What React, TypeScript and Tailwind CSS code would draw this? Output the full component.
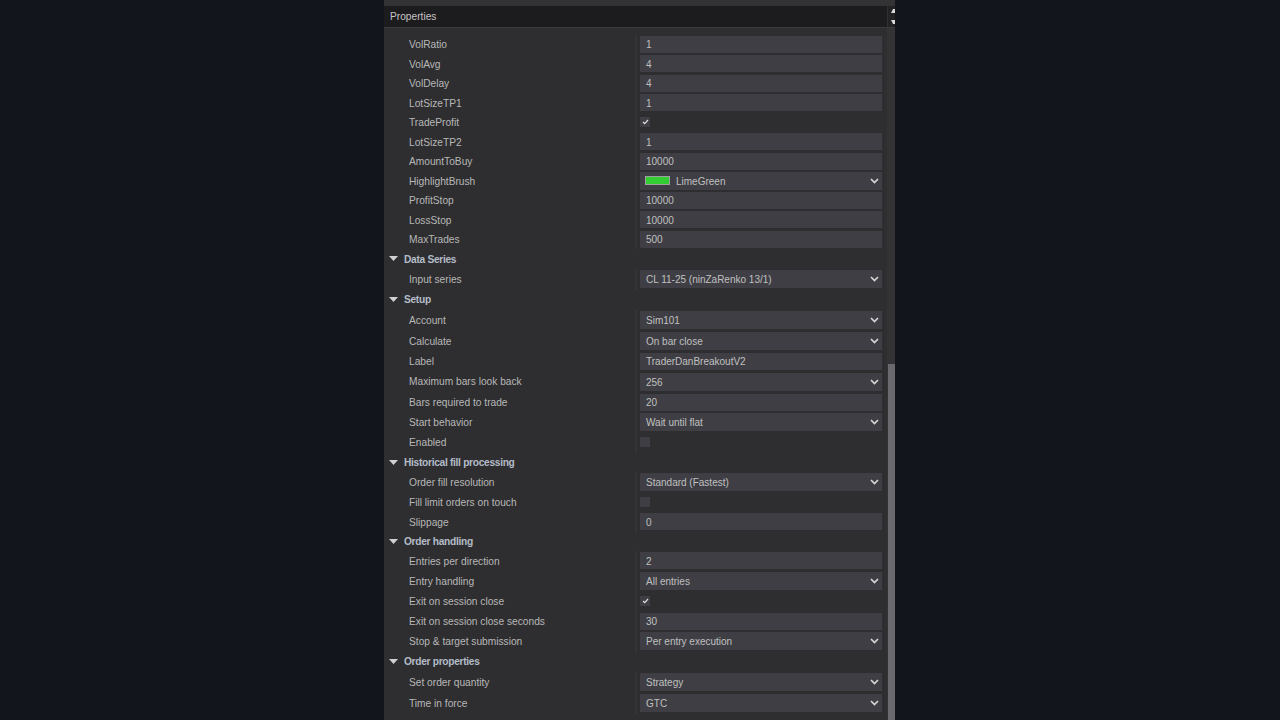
type Kind = "text" | "combo" | "check" | "cat" | "brush";
type Row = { k: Kind; l: string; v?: string; on?: boolean; h: number };

const rows: Row[] = [
  { k: "text", l: "VolRatio", v: "1", h: 19.5 },
  { k: "text", l: "VolAvg", v: "4", h: 19.5 },
  { k: "text", l: "VolDelay", v: "4", h: 19.5 },
  { k: "text", l: "LotSizeTP1", v: "1", h: 19.5 },
  { k: "check", l: "TradeProfit", on: true, h: 19.5 },
  { k: "text", l: "LotSizeTP2", v: "1", h: 19.5 },
  { k: "text", l: "AmountToBuy", v: "10000", h: 19.5 },
  { k: "brush", l: "HighlightBrush", v: "LimeGreen", h: 19.5 },
  { k: "text", l: "ProfitStop", v: "10000", h: 19.5 },
  { k: "text", l: "LossStop", v: "10000", h: 19.5 },
  { k: "text", l: "MaxTrades", v: "500", h: 19.5 },
  { k: "cat", l: "Data Series", h: 19.5 },
  { k: "combo", l: "Input series", v: "CL 11-25 (ninZaRenko 13/1)", h: 21 },
  { k: "cat", l: "Setup", h: 20 },
  { k: "combo", l: "Account", v: "Sim101", h: 21.5 },
  { k: "combo", l: "Calculate", v: "On bar close", h: 20 },
  { k: "text", l: "Label", v: "TraderDanBreakoutV2", h: 20 },
  { k: "combo", l: "Maximum bars look back", v: "256", h: 21 },
  { k: "text", l: "Bars required to trade", v: "20", h: 20 },
  { k: "combo", l: "Start behavior", v: "Wait until flat", h: 20.5 },
  { k: "check", l: "Enabled", h: 19.5 },
  { k: "cat", l: "Historical fill processing", h: 20 },
  { k: "combo", l: "Order fill resolution", v: "Standard (Fastest)", h: 20.5 },
  { k: "check", l: "Fill limit orders on touch", h: 19.5 },
  { k: "text", l: "Slippage", v: "0", h: 19.5 },
  { k: "cat", l: "Order handling", h: 19.5 },
  { k: "text", l: "Entries per direction", v: "2", h: 19.5 },
  { k: "combo", l: "Entry handling", v: "All entries", h: 20.5 },
  { k: "check", l: "Exit on session close", on: true, h: 20.5 },
  { k: "text", l: "Exit on session close seconds", v: "30", h: 19.5 },
  { k: "combo", l: "Stop & target submission", v: "Per entry execution", h: 20.5 },
  { k: "cat", l: "Order properties", h: 20 },
  { k: "combo", l: "Set order quantity", v: "Strategy", h: 21 },
  { k: "combo", l: "Time in force", v: "GTC", h: 21 },
];

function Chevron() {
  return (
    <svg width="9" height="6" viewBox="0 0 9 6" className="shrink-0">
      <path d="M1 1 L4.5 4.5 L8 1" fill="none" stroke="#d6d6d6" strokeWidth="1.7" />
    </svg>
  );
}

function Field({ r }: { r: Row }) {
  if (r.k === "check") {
    return (
      <div className="flex h-[10px] w-[10px] items-center justify-center bg-[#3e3e44]">
        {r.on && (
          <svg width="7" height="6" viewBox="0 0 7 6">
            <path d="M1 3 L2.7 4.6 L6 1" fill="none" stroke="#e0e0e0" strokeWidth="1.2" />
          </svg>
        )}
      </div>
    );
  }
  if (r.k === "text") {
    return (
      <div className="flex h-[17px] w-[242px] items-center bg-[#3e3e44] pl-[6px] pt-[2px] text-[10px] text-[#c0c0c0]">{r.v}</div>
    );
  }
  if (r.k === "brush") {
    return (
      <div className="flex h-[18px] w-[242px] items-center bg-[#3e3e44] pl-[5px] pr-[3px] text-[10px] text-[#c0c0c0]">
        <span className="mr-[6px] h-[9px] w-[25px] border border-[#a0a0a0] bg-[#32cd32]" />
        <span className="flex-1 pt-[2px]">{r.v}</span>
        <Chevron />
      </div>
    );
  }
  return (
    <div className="flex h-[18px] w-[242px] items-center bg-[#3e3e44] pl-[6px] pr-[3px] text-[10px] text-[#c0c0c0]">
      <span className="flex-1 pt-[2px]">{r.v}</span>
      <Chevron />
    </div>
  );
}

function RowView({ r }: { r: Row }) {
  if (r.k === "cat") {
    return (
      <div className="flex items-center" style={{ height: r.h }}>
        <svg width="9" height="5" viewBox="0 0 9 5" className="ml-[5px] mr-[6px] shrink-0">
          <path d="M0 0 H9 L4.5 5 Z" fill="#d0d0d0" />
        </svg>
        <span className="pt-[2px] font-bold tracking-[-0.3px] text-[#b4bcc8]">{r.l}</span>
      </div>
    );
  }
  return (
    <div className="flex items-center" style={{ height: r.h }}>
      <span className="w-[251px] shrink-0 pl-[25px] pt-[2px] text-[#b8b8b8]">{r.l}</span>
      <span className="h-full w-[2px] shrink-0 bg-[#343436]" />
      <span className="w-[3px] shrink-0" />
      <Field r={r} />
    </div>
  );
}

export default function App() {
  return (
    <div
      className="h-[720px] w-full overflow-hidden bg-[#12151c] text-[10.2px] leading-none"
      style={{ fontFamily: '"Liberation Sans", Arial, sans-serif' }}
    >
      <div className="ml-[384px] flex h-full w-[511px] flex-col bg-[#2e2e30]">
        <div className="h-[6px] shrink-0 bg-[#333335]" />
        <div className="flex h-[21px] shrink-0 items-center bg-[#1c1c1e] pl-[6px] text-[#c4c4c4]">
          <span className="flex-1 pt-[2px]">Properties</span>
          <div className="flex h-full w-[8px] flex-col items-end justify-center gap-[7px] border-l border-[#303032] bg-[#232325]">
            <svg width="4" height="4" viewBox="0 0 4 4"><path d="M0 4 L4 4 L4 0 L2 0 Z" fill="#d8d8d8" /></svg>
            <svg width="4" height="4" viewBox="0 0 4 4"><path d="M0 0 L4 0 L4 4 L2 4 Z" fill="#d8d8d8" /></svg>
          </div>
        </div>
        <div className="h-[1px] shrink-0 bg-[#3a3a3c]" />
        <div className="flex min-h-0 flex-1">
          <div className="min-w-0 flex-1 pt-[6.5px]">
            {rows.map((r) => (
              <RowView key={r.l} r={r} />
            ))}
          </div>
          <div className="flex w-[8px] shrink-0 flex-col bg-[#333335]">
            <div className="flex-1" />
            <div className="ml-[1px] h-[356px] w-[7px] bg-[#6a6a6e]" />
          </div>
        </div>
      </div>
    </div>
  );
}
